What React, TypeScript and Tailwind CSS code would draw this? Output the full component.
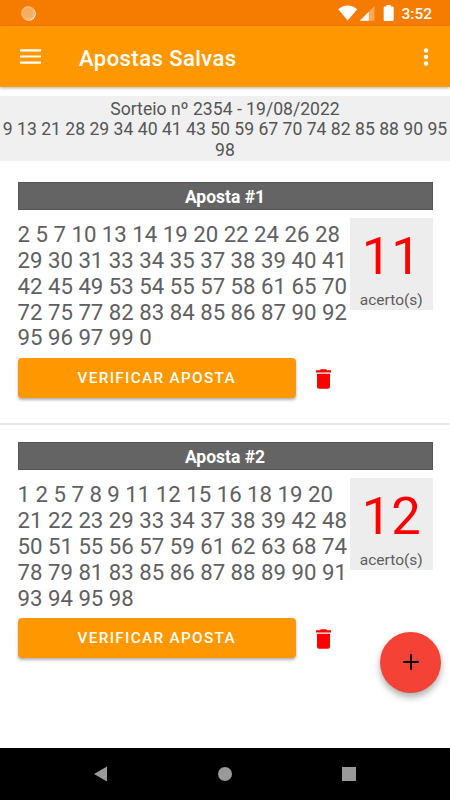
import React from 'react';

type Bet = { id: number; lines: string[]; hits: number };

const bets: Bet[] = [
  {
    id: 1,
    hits: 11,
    lines: [
      '2 5 7 10 13 14 19 20 22 24 26 28',
      '29 30 31 33 34 35 37 38 39 40 41',
      '42 45 49 53 54 55 57 58 61 65 70',
      '72 75 77 82 83 84 85 86 87 90 92',
      '95 96 97 99 0',
    ],
  },
  {
    id: 2,
    hits: 12,
    lines: [
      '1 2 5 7 8 9 11 12 15 16 18 19 20',
      '21 22 23 29 33 34 37 38 39 42 48',
      '50 51 55 56 57 59 61 62 63 68 74',
      '78 79 81 83 85 86 87 88 89 90 91',
      '93 94 95 98',
    ],
  },
];

function StatusBar() {
  return (
    <div className="flex h-[26px] items-center bg-[#f57c00] pl-5 pr-[18px]">
      <svg className="h-4 w-4 mt-[-1px]" viewBox="0 0 16 16">
        <circle cx="8.8" cy="8.8" r="7" fill="#fff3e0" />
        <circle cx="8" cy="8" r="7" fill="#f9ad62" />
        <circle cx="8" cy="8" r="5.8" fill="none" stroke="#fbd0a2" strokeWidth="1" strokeDasharray="1 1" />
      </svg>
      <svg className="ml-auto h-4 w-[60px]" viewBox="0 0 60 16">
        <path d="M3.2 4.2C8.5-.9 17-.9 22.2 4.2L12.7 15.6Z" fill="#fff" />
        <path d="M39.5 1V15.8H24.7Z" fill="#fba85a" />
        <path d="M33.8 6.7V15.8H24.7Z" fill="#fff" />
        <path d="M51.3 0h4.4v1.5h2q1 0 1 1v12.4q0 1-1 1h-8q-1 0-1-1V2.500q0-1 1-1h1.600Z" fill="#fff" />
      </svg>
      <span className="ml-[6.500px] mt-[3px] text-[15.500px] font-medium leading-none text-white">3:52</span>
    </div>
  );
}

function AppBar() {
  return (
    <header className="flex h-[61px] items-center bg-[#ff9800] pl-5 pr-[19px] shadow-[0_1px_3px_rgba(0,0,0,0.3)]">
      <svg className="h-[15px] w-[21px]" viewBox="0 0 21 15" fill="#fff">
        <path d="M0 .3h21v2.200H0zM0 6.400h21v2.200H0zM0 12.500h21v2.200H0z" />
      </svg>
      <h1 className="ml-[38px] mt-[4px] text-[22px] font-medium leading-none tracking-[0.450px] text-white">
        Apostas Salvas
      </h1>
      <svg className="ml-auto h-[18px] w-[10px]" viewBox="0 0 10 18" fill="#fff">
        <circle cx="5" cy="2.500" r="2.200" />
        <circle cx="5" cy="9" r="2.200" />
        <circle cx="5" cy="15.500" r="2.200" />
      </svg>
    </header>
  );
}

function BetCard({ bet }: { bet: Bet }) {
  return (
    <section className="px-[17.500px]">
      <h2 className="flex h-[28px] items-center justify-center border border-[#555] bg-[#646464] pt-[4px] text-[17.500px] font-bold leading-none text-white">
        Aposta #{bet.id}
      </h2>
      <div className="mt-[8.500px] flex h-[139.500px] justify-between">
        <p className="whitespace-pre pt-[3.600px] text-[22.200px] leading-[25.900px] text-[#606060]">
          {bet.lines.join('\n')}
        </p>
        <div className="flex h-[91.500px] w-[82.500px] shrink-0 flex-col items-center bg-[#ededed]">
          <span className="mt-[7px] text-[52.500px] leading-[62px] text-[#ff0000]">{bet.hits}</span>
          <span className="mt-[4px] text-[15.500px] leading-[18px] text-[#5c5c5c]">acerto(s)</span>
        </div>
      </div>
      <div className="flex h-10 items-center">
        <button className="h-10 w-[278.500px] rounded bg-[#ff9800] pt-px text-[15.300px] font-medium leading-none tracking-[1.320px] text-white shadow-[0_2px_3px_rgba(0,0,0,0.3)]">
          VERIFICAR APOSTA
        </button>
        <button className="ml-5" aria-label="Excluir">
          <svg className="mt-[2px] h-5 w-[15px]" viewBox="0 0 15 20" fill="#ff0000">
            <path d="M0 1.300h4L4.800.300h5.400L11 1.300h4v2.100H0zM1 4.700h13v13q0 2-2 2H3q-2 0-2-2z" />
          </svg>
        </button>
      </div>
    </section>
  );
}

export default function App() {
  return (
    <div className="relative flex h-[800px] w-[450px] flex-col overflow-hidden bg-white font-[Roboto,sans-serif]">
      <StatusBar />
      <AppBar />
      <div className="mt-[9px] h-[65px] shrink-0 bg-[#f0f0f0] pt-[3px] text-center text-[17.600px] leading-[20.300px] text-[#555]">
        <p>Sorteio nº 2354 - 19/08/2022</p>
        <p className="whitespace-nowrap">9 13 21 28 29 34 40 41 43 50 59 67 70 74 82 85 88 90 95</p>
        <p>98</p>
      </div>
      <main className="flex-1 pt-[20.700px]">
        <div className="h-[241.300px]">
          <BetCard bet={bets[0]} />
        </div>
        <div className="h-[2px] bg-[#e8e8e8]" />
        <div className="pt-[17px]">
          <BetCard bet={bets[1]} />
        </div>
      </main>
      <button
        aria-label="Adicionar"
        className="absolute left-[380px] top-[631.500px] flex h-[61px] w-[61px] items-center justify-center rounded-full bg-[#f44336] shadow-[0_4px_7px_rgba(0,0,0,0.32)]"
      >
        <svg className="h-4 w-4" viewBox="0 0 16 16" stroke="#000" strokeWidth="1.900">
          <path d="M.3 8h15.400M8 .3v15.400" />
        </svg>
      </button>
      <nav className="flex h-[52px] shrink-0 items-center bg-black pl-[94px]">
        <svg className="h-4 w-[13px]" viewBox="0 0 13 16" fill="#999">
          <path d="M13 .5v15L0 8z" />
        </svg>
        <span className="ml-[110.500px] h-[14.500px] w-[14.500px] rounded-full bg-[#999]" />
        <span className="ml-[110px] h-[14px] w-[14px] bg-[#999]" />
      </nav>
    </div>
  );
}
